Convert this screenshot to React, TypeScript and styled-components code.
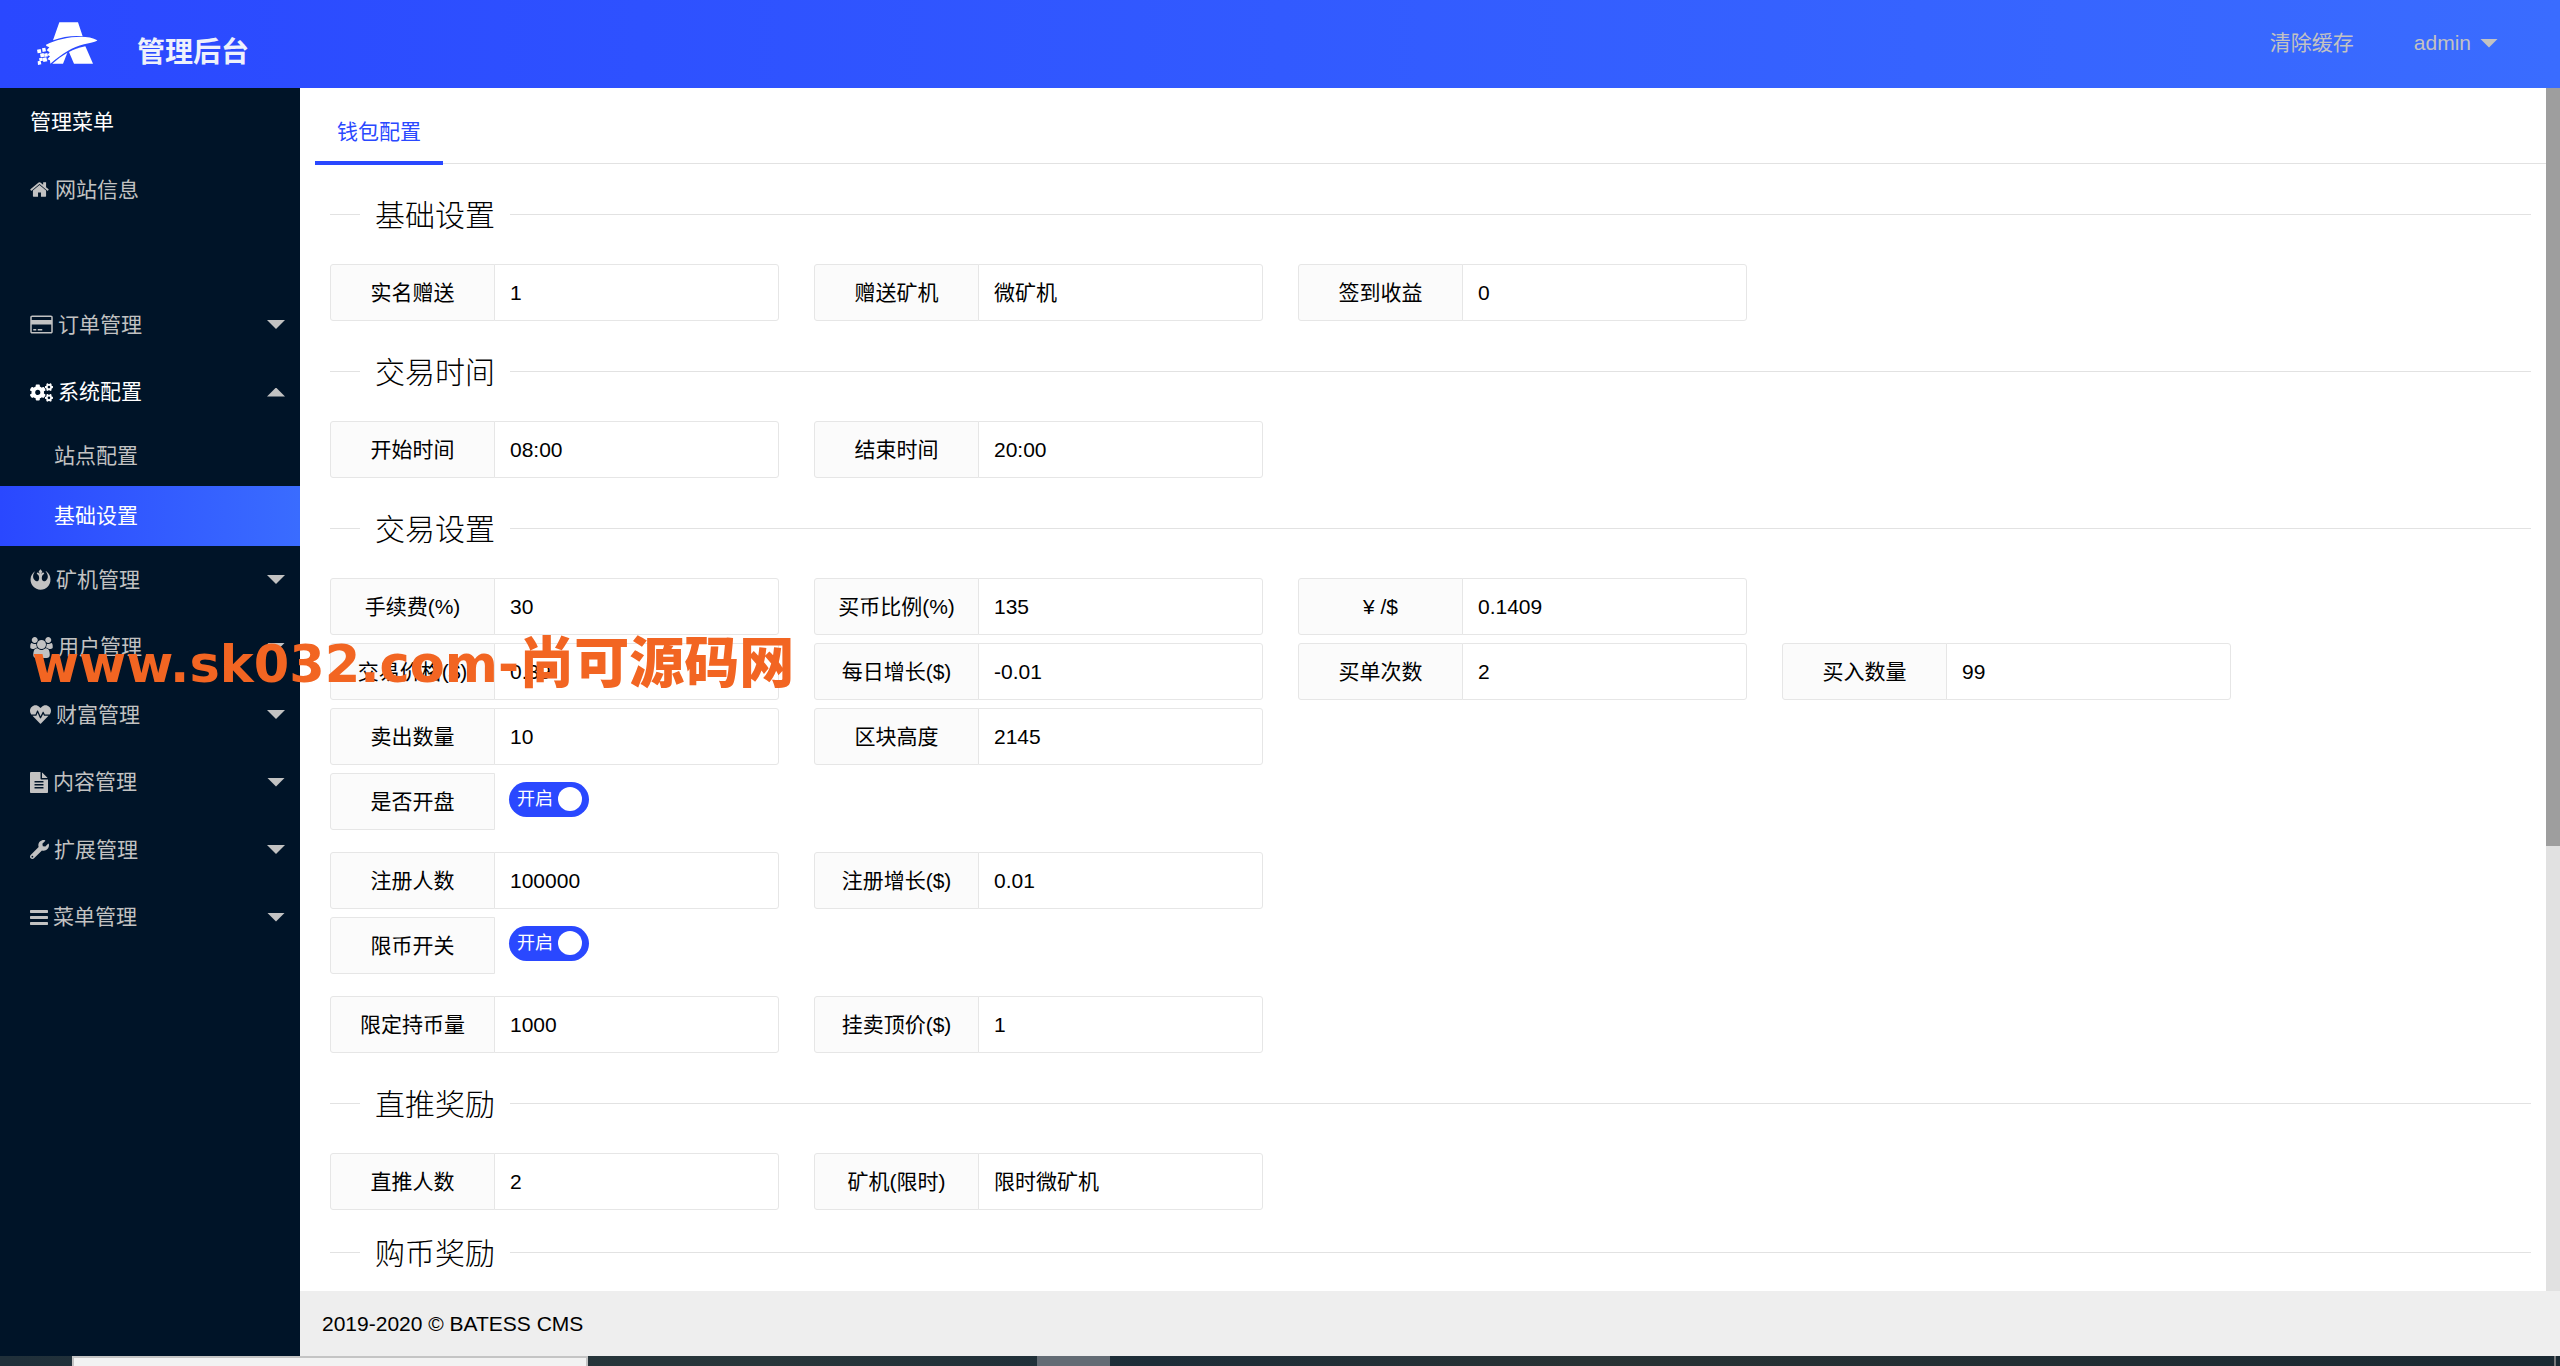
import React, { useId, useState } from 'react';
import styled, { createGlobalStyle, css } from 'styled-components';
import { FaCogs, FaHeartbeat, FaRebel, FaWrench } from 'react-icons/fa';

const BLUE = '#2a48ff';
const LINE = '#e2e2e2';
const MUTED = '#c2c2c2';
const SANS = '"Liberation Sans", Arial, "Noto Sans CJK SC", sans-serif';

const GlobalStyle = createGlobalStyle`
  *, *::before, *::after { box-sizing: border-box; }
  html, body { margin: 0; padding: 0; }
  body {
    font-family: ${SANS};
    font-size: 21px;
    line-height: 30px;
    font-weight: 400;
    color: #000;
    background: #fff;
    overflow: hidden;
  }
  a { color: inherit; text-decoration: none; }
  button, input { font: inherit; }
`;

const Page = styled.div`
  height: 100vh;
  display: flex;
  flex-direction: column;
`;

/* ---------- header ---------- */

const Header = styled.header`
  flex: none;
  height: 88px;
  padding: 0 62px 0 36px;
  display: flex;
  align-items: center;
  background: linear-gradient(90deg, ${BLUE}, #3a6cff);
`;

const Brand = styled.a`
  display: flex;
  align-items: center;
  gap: 38px;
`;

const BrandName = styled.h1`
  margin: 0;
  padding-top: 18px;
  font-size: 28px;
  line-height: 32px;
  font-weight: 700;
  color: #eef1fb;
`;

const HeaderNav = styled.nav`
  margin-left: auto;
  padding-bottom: 2px;
  display: flex;
  align-items: center;
  gap: 60px;
  color: ${MUTED};
`;

const UserButton = styled.button`
  display: flex;
  align-items: center;
  gap: 9px;
  padding: 0;
  border: 0;
  background: none;
  color: inherit;
  cursor: pointer;
`;

const Caret = styled.span<{ $up?: boolean }>`
  width: 18px;
  height: 9px;
  background: ${MUTED};
  clip-path: ${(p) =>
    p.$up ? 'polygon(0 100%, 50% 0, 100% 100%)' : 'polygon(0 0, 100% 0, 50% 100%)'};
`;

/* ---------- side menu ---------- */

const Body = styled.div`
  flex: 1;
  min-height: 0;
  display: flex;
`;

const Sidebar = styled.nav`
  flex: none;
  width: 300px;
  background: #001428;
  color: ${MUTED};
  overflow: hidden;
`;

const MenuList = styled.ul`
  list-style: none;
  margin: 0;
  padding: 0;
`;

const rowBox = css`
  display: flex;
  align-items: center;
  width: 100%;
  height: 68px;
  padding: 0 15px 0 30px;
`;

const MenuItem = styled.li`
  &:nth-child(even) > :first-child {
    height: 67px;
  }
`;

const MenuHeading = styled.h2`
  ${rowBox}
  margin: 0;
  font-size: 21px;
  font-weight: 400;
  color: #fff;
`;

const MenuLink = styled.a`
  ${rowBox}
  gap: 6px;
`;

const MenuSpace = styled.div`
  ${rowBox}
`;

const MenuToggle = styled.button<{ $open: boolean }>`
  ${rowBox}
  gap: 5px;
  border: 0;
  background: none;
  color: ${(p) => (p.$open ? '#fff' : 'inherit')};
  text-align: left;
  cursor: pointer;

  & > svg {
    flex: none;
  }
  & > ${Caret} {
    margin-left: auto;
  }
`;

const SubLink = styled.a<{ $active?: boolean }>`
  display: flex;
  align-items: center;
  height: 60px;
  padding-left: 54px;
  ${(p) =>
    p.$active &&
    css`
      color: #fff;
      background: linear-gradient(90deg, ${BLUE}, #3a6cff);
    `}
`;

/* ---------- content ---------- */

const Main = styled.div`
  flex: 1;
  min-width: 0;
  display: flex;
  flex-direction: column;
`;

const Viewport = styled.div`
  flex: 1;
  min-height: 0;
  display: flex;
`;

const Content = styled.main`
  flex: 1;
  min-width: 0;
  padding: 15px 0 0 15px;
  overflow: hidden;
`;

const ScrollTrack = styled.div`
  flex: none;
  width: 14px;
  background: #e1e1e1;
`;

const ScrollThumb = styled.div`
  height: 63%;
  background: #9e9e9e;
`;

const Tabs = styled.div`
  display: flex;
  height: 61px;
  border-bottom: 1px solid ${LINE};
`;

const Tab = styled.button`
  height: 62px;
  padding: 0 22px;
  border: 0;
  border-bottom: 4px solid ${BLUE};
  background: none;
  color: ${BLUE};
  cursor: pointer;
`;

const Form = styled.form`
  padding: 28px 15px 0;
`;

const Section = styled.fieldset<{ $compact?: boolean }>`
  min-width: 0;
  margin: 0 0 ${(p) => (p.$compact ? 20 : 28)}px;
  padding: 28px 0 0;
  border: 0;
  border-top: 1px solid ${LINE};
`;

const Legend = styled.legend`
  margin-left: 30px;
  padding: 4px 15px 0;
  font-size: 30px;
  line-height: 40px;
  font-weight: 300;
`;

const Rows = styled.div`
  display: flex;
  flex-direction: column;
  gap: 8px;
`;

const Row = styled.div<{ $switch?: boolean }>`
  display: flex;
  flex-wrap: wrap;
  gap: 8px 35px;
  padding-bottom: ${(p) => (p.$switch ? 14 : 0)}px;
`;

const Field = styled.div`
  display: flex;
  width: 449px;
  height: 57px;
`;

const FieldLabel = styled.label`
  flex: none;
  display: flex;
  align-items: center;
  justify-content: center;
  width: 165px;
  border: 1px solid #e6e6e6;
  border-radius: 3px 0 0 3px;
  background: #fbfbfb;
`;

const TextInput = styled.input`
  flex: 1;
  min-width: 0;
  margin-left: -1px;
  padding: 0 15px;
  border: 1px solid #e6e6e6;
  border-radius: 0 3px 3px 0;
  background: #fff;
  color: #000;
  outline: none;
`;

const Switch = styled.label<{ $on: boolean }>`
  display: flex;
  align-items: center;
  flex-direction: ${(p) => (p.$on ? 'row' : 'row-reverse')};
  justify-content: space-between;
  width: 80px;
  height: 35px;
  margin: 9px 0 0 14px;
  padding: 0 7px 2px 8px;
  border-radius: 18px;
  background: ${(p) => (p.$on ? BLUE : '#d2d2d2')};
  color: #fff;
  font-size: 18px;
  cursor: pointer;
`;

const Knob = styled.input`
  appearance: none;
  width: 24px;
  height: 24px;
  margin: 0;
  border-radius: 50%;
  background: #fff;
  cursor: pointer;
`;

const Footer = styled.footer`
  flex: none;
  height: 65px;
  padding: 0 22px;
  display: flex;
  align-items: center;
  background: #eee;
`;

/* ---------- desktop strip and overlay ---------- */

const TaskBar = styled.div`
  flex: none;
  height: 10px;
  padding: 0 4px 0 72px;
  display: flex;
  background: linear-gradient(90deg, #20303a, #28363a 30%, #1d2d38 45%, #283234 62%, #1a2932);
`;

const TaskSearch = styled.div`
  width: 516px;
  border: 2px solid #c4c4c4;
  border-bottom: 0;
  background: #f2f2f2;
`;

const TaskActive = styled.div`
  width: 73px;
  margin-left: 449px;
  background: #636b74;
`;

const TaskEdge = styled.div`
  width: 2px;
  margin-left: auto;
  background: #77797c;
`;

const Watermark = styled.div`
  position: absolute;
  left: 32px;
  top: 633px;
  display: flex;
  align-items: flex-start;
  font-weight: 700;
  white-space: nowrap;
  color: #f26522;
  pointer-events: none;
`;

const WatermarkLatin = styled.span`
  font-family: "DejaVu Sans", sans-serif;
  font-size: 51px;
  line-height: 64px;
`;

const WatermarkHan = styled.span`
  font-family: "Noto Sans CJK SC", sans-serif;
  font-size: 55px;
  line-height: 50px;
  font-weight: 900;
`;

/* ---------- drawings ---------- */

const Logo = () => (
  <svg width="63" height="46" viewBox="0 0 189 138" fill="#fff" aria-hidden="true">
    <path d="M70 4h56l14 42C113 43 80 47 51 58z" />
    <path d="M30 71C75 49 150 38 184 58c-2 5-20 7-40 12-35 9-62 26-101 58l-1-10-8-3 8-9-8-4 7-8-9-6 8-9-9-4z" />
    <path d="M94 95l-13 33H49c14-13 29-24 45-33z" />
    <path d="M99 93c16-8 32-13 49-17l23 52h-57z" />
    <path d="M3 86l11-2 2 11-11 2zM12 98l11-2 2 11-11 2zM18 82l10-2 2 11-10 2zM5 121l9-2 2 11-10 2zM9 112l10-2 2 9-10 2zM20 111l11-2 3 12-12 2zM24 98l10-2 2 10-10 2z" />
  </svg>
);

type GlyphProps = { width: number; box: string; d: string };

const Glyph = ({ width, box, d }: GlyphProps) => (
  <svg width={width} height={21} viewBox={box} fill="currentColor" aria-hidden="true">
    <path d={d} />
  </svg>
);

const HomeIcon = () => (
  <Glyph
    width={19}
    box="64 0 1664 1792"
    d="M1472 992v480q0 26-19 45t-45 19h-384v-384h-256v384h-384q-26 0-45-19t-19-45v-480q0-1 .5-3t.5-3l575-474 575 474q1 2 1 6zm223-69l-62 74q-8 9-21 11h-3q-13 0-21-7l-692-577-692 577q-12 8-24 7-13-2-21-11l-62-74q-8-10-7-23.5t11-21.5l719-599q32-26 76-26t76 26l244 204v-195q0-14 9-23t23-9h192q14 0 23 9t9 23v408l219 182q10 8 11 21.5t-7 23.5z"
  />
);

const CardIcon = () => (
  <Glyph
    width={23}
    box="0 0 1920 1792"
    d="M1760 128q66 0 113 47t47 113v1216q0 66-47 113t-113 47h-1600q-66 0-113-47t-47-113v-1216q0-66 47-113t113-47h1600zm-1600 128q-13 0-22.500 9.500t-9.500 22.500v224h1664v-224q0-13-9.500-22.500t-22.500-9.500h-1600zm1600 1280q13 0 22.500-9.500t9.500-22.500v-608h-1664v608q0 13 9.500 22.500t22.500 9.500h1600zm-1504-128v-128h256v128h-256zm384 0v-128h384v128h-384z"
  />
);

const UsersIcon = () => (
  <Glyph
    width={23}
    box="0 0 1920 1792"
    d="M593 896q-162 5-265 128h-134q-82 0-138-40.500t-56-118.500q0-353 124-353 6 0 43.500 21t97.500 42.500 119 21.500q67 0 133-23-5 37-5 66 0 139 81 256zm1071 637q0 120-73 189.500t-194 69.500h-874q-121 0-194-69.500t-73-189.500q0-53 3.500-103.500t14-109 26.500-108.500 43-97.500 62-81 85.500-53.500 111.500-20q10 0 43 21.500t73 48 107 48 135 21.500 135-21.500 107-48 73-48 43-21.500q61 0 111.500 20t85.500 53.500 62 81 43 97.500 26.500 108.500 14 109 3.500 103.500zm-1024-1277q0 106-75 181t-181 75-181-75-75-181 75-181 181-75 181 75 75 181zm704 384q0 159-112.500 271.500t-271.500 112.500-271.500-112.500-112.500-271.500 112.500-271.500 271.500-112.500 271.500 112.500 112.500 271.500zm576 225q0 78-56 118.500t-138 40.500h-134q-103-123-265-128 81-117 81-256 0-29-5-66 66 23 133 23 59 0 119-21.500t97.500-42.500 43.500-21q124 0 124 353zm-128-609q0 106-75 181t-181 75-181-75-75-181 75-181 181-75 181 75 75 181z"
  />
);

const FileIcon = () => (
  <Glyph
    width={18}
    box="128 0 1536 1792"
    d="M1596 476q14 14 28 36h-472v-472q22 14 36 28zm-476 164h544v1056q0 40-28 68t-68 28h-1344q-40 0-68-28t-28-68v-1600q0-40 28-68t68-28h800v544q0 40 28 68t68 28zm160 736v-64q0-14-9-23t-23-9h-704q-14 0-23 9t-9 23v64q0 14 9 23t23 9h704q14 0 23-9t9-23zm0-256v-64q0-14-9-23t-23-9h-704q-14 0-23 9t-9 23v64q0 14 9 23t23 9h704q14 0 23-9t9-23zm0-256v-64q0-14-9-23t-23-9h-704q-14 0-23 9t-9 23v64q0 14 9 23t23 9h704q14 0 23-9t9-23z"
  />
);

const BarsIcon = () => (
  <Glyph
    width={18}
    box="0 0 1536 1792"
    d="M1536 1344v128q0 26-19 45t-45 19h-1408q-26 0-45-19t-19-45v-128q0-26 19-45t45-19h1408q26 0 45 19t19 45zm0-512v128q0 26-19 45t-45 19h-1408q-26 0-45-19t-19-45v-128q0-26 19-45t45-19h1408q26 0 45 19t19 45zm0-512v128q0 26-19 45t-45 19h-1408q-26 0-45-19t-19-45v-128q0-26 19-45t45-19h1408q26 0 45 19t19 45z"
  />
);

/* ---------- data ---------- */

type MenuGroup = { name: string; icon: React.ReactNode; children?: string[] };

const GROUPS: MenuGroup[] = [
  { name: '订单管理', icon: <CardIcon /> },
  { name: '系统配置', icon: <FaCogs size={23} />, children: ['站点配置', '基础设置'] },
  { name: '矿机管理', icon: <FaRebel size={21} /> },
  { name: '用户管理', icon: <UsersIcon /> },
  { name: '财富管理', icon: <FaHeartbeat size={21} /> },
  { name: '内容管理', icon: <FileIcon /> },
  { name: '扩展管理', icon: <FaWrench size={19} /> },
  { name: '菜单管理', icon: <BarsIcon /> },
];

type RowData = { fields?: [string, string][]; toggle?: string };
type SectionData = { title: string; compact?: boolean; rows: RowData[] };

const SECTIONS: SectionData[] = [
  {
    title: '基础设置',
    rows: [{ fields: [['实名赠送', '1'], ['赠送矿机', '微矿机'], ['签到收益', '0']] }],
  },
  {
    title: '交易时间',
    rows: [{ fields: [['开始时间', '08:00'], ['结束时间', '20:00']] }],
  },
  {
    title: '交易设置',
    rows: [
      { fields: [['手续费(%)', '30'], ['买币比例(%)', '135'], ['¥ /$', '0.1409']] },
      { fields: [['交易价格($)', '0.39'], ['每日增长($)', '-0.01'], ['买单次数', '2'], ['买入数量', '99']] },
      { fields: [['卖出数量', '10'], ['区块高度', '2145']] },
      { toggle: '是否开盘' },
      { fields: [['注册人数', '100000'], ['注册增长($)', '0.01']] },
      { toggle: '限币开关' },
      { fields: [['限定持币量', '1000'], ['挂卖顶价($)', '1']] },
    ],
  },
  {
    title: '直推奖励',
    compact: true,
    rows: [{ fields: [['直推人数', '2'], ['矿机(限时)', '限时微矿机']] }],
  },
  { title: '购币奖励', rows: [] },
];

/* ---------- parts ---------- */

const TextField = ({ label, value }: { label: string; value: string }) => {
  const id = useId();
  return (
    <Field>
      <FieldLabel htmlFor={id}>{label}</FieldLabel>
      <TextInput id={id} type="text" defaultValue={value} />
    </Field>
  );
};

const SwitchField = ({ label }: { label: string }) => {
  const id = useId();
  const [on, setOn] = useState(true);
  return (
    <Field>
      <FieldLabel htmlFor={id}>{label}</FieldLabel>
      <Switch $on={on}>
        <span>{on ? '开启' : '关闭'}</span>
        <Knob id={id} type="checkbox" checked={on} onChange={(e) => setOn(e.target.checked)} />
      </Switch>
    </Field>
  );
};

const SideGroup = ({ group }: { group: MenuGroup }) => {
  const [open, setOpen] = useState(Boolean(group.children));
  return (
    <MenuItem>
      <MenuToggle type="button" $open={open} aria-expanded={open} onClick={() => setOpen(!open)}>
        {group.icon}
        <span>{group.name}</span>
        <Caret $up={open} />
      </MenuToggle>
      {open &&
        group.children?.map((child) => (
          <SubLink key={child} href="#" $active={child === '基础设置'}>
            {child}
          </SubLink>
        ))}
    </MenuItem>
  );
};

export default function App() {
  return (
    <Page>
      <GlobalStyle />
      <Header>
        <Brand href="#">
          <Logo />
          <BrandName>管理后台</BrandName>
        </Brand>
        <HeaderNav>
          <a href="#">清除缓存</a>
          <UserButton type="button">
            admin
            <Caret />
          </UserButton>
        </HeaderNav>
      </Header>

      <Body>
        <Sidebar>
          <MenuList>
            <MenuItem>
              <MenuHeading>管理菜单</MenuHeading>
            </MenuItem>
            <MenuItem>
              <MenuLink href="#">
                <HomeIcon />
                <span>网站信息</span>
              </MenuLink>
            </MenuItem>
            <MenuItem>
              <MenuSpace />
            </MenuItem>
            {GROUPS.map((group) => (
              <SideGroup key={group.name} group={group} />
            ))}
          </MenuList>
        </Sidebar>

        <Main>
          <Viewport>
            <Content>
              <Tabs>
                <Tab type="button">钱包配置</Tab>
              </Tabs>
              <Form>
                {SECTIONS.map((section) => (
                  <Section key={section.title} $compact={section.compact}>
                    <Legend>{section.title}</Legend>
                    <Rows>
                      {section.rows.map((row, i) => (
                        <Row key={i} $switch={Boolean(row.toggle)}>
                          {row.toggle && <SwitchField label={row.toggle} />}
                          {row.fields?.map(([label, value]) => (
                            <TextField key={label} label={label} value={value} />
                          ))}
                        </Row>
                      ))}
                    </Rows>
                  </Section>
                ))}
              </Form>
            </Content>
            <ScrollTrack>
              <ScrollThumb />
            </ScrollTrack>
          </Viewport>
          <Footer>2019-2020 © BATESS CMS</Footer>
        </Main>
      </Body>

      <TaskBar>
        <TaskSearch />
        <TaskActive />
        <TaskEdge />
      </TaskBar>

      <Watermark>
        <WatermarkLatin>www.sk032.com-</WatermarkLatin>
        <WatermarkHan>尚可源码网</WatermarkHan>
      </Watermark>
    </Page>
  );
}
